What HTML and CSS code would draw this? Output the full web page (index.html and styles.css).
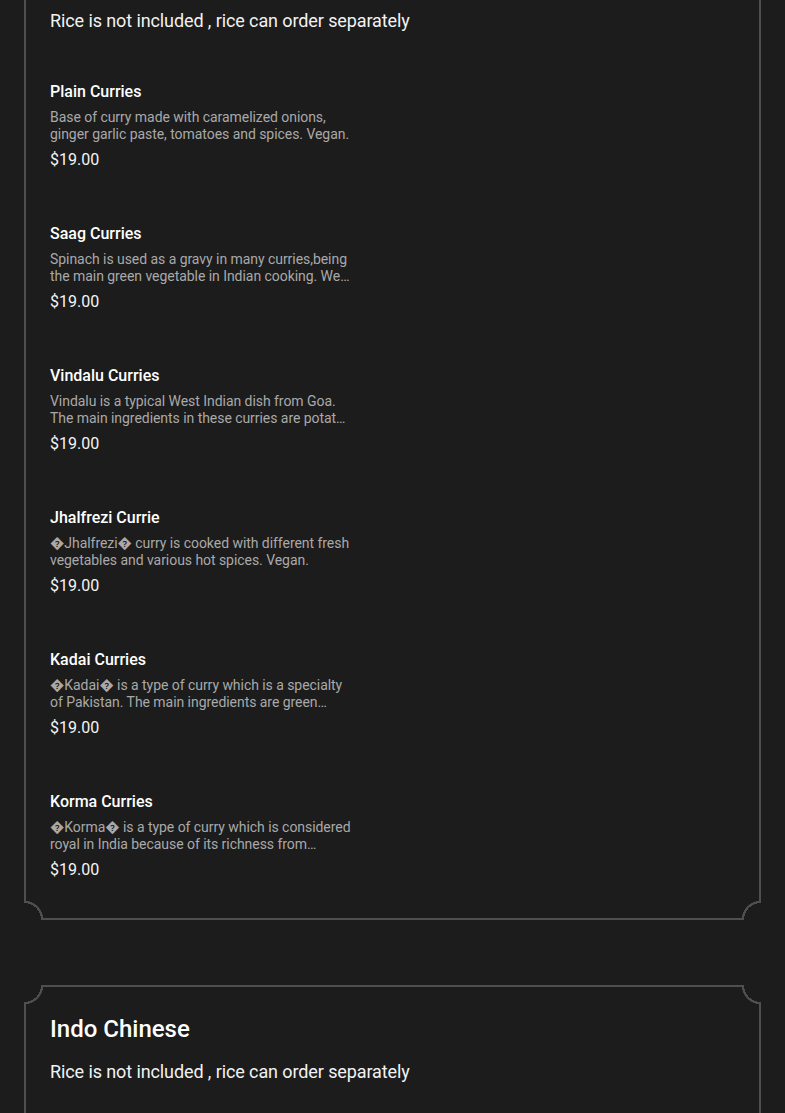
FILE: index.html
```html
<!DOCTYPE html>
<html lang="en">
<head>
<meta charset="utf-8">
<title>Menu</title>
<link rel="stylesheet" href="styles.css">
</head>
<body>
<main class="page">
  <section class="card card--continued">
    <span class="corner corner--tl"></span>
    <span class="corner corner--tr"></span>
    <span class="corner corner--bl"></span>
    <span class="corner corner--br"></span>
    <p class="note">Rice is not included , rice can order separately</p>
    <div class="items">
      <article class="item">
        <h3 class="item-title">Plain Curries</h3>
        <p class="item-desc">Base of curry made with caramelized onions, ginger garlic paste, tomatoes and spices. Vegan.</p>
        <p class="item-price">$19.00</p>
      </article>
      <article class="item">
        <h3 class="item-title">Saag Curries</h3>
        <p class="item-desc"><span class="line">Spinach is used as a gravy in many curries,being</span><span class="line-rest">the main green vegetable in Indian cooking. We use fresh spinach cooked with spices. Vegan.</span></p>
        <p class="item-price">$19.00</p>
      </article>
      <article class="item">
        <h3 class="item-title">Vindalu Curries</h3>
        <p class="item-desc"><span class="line">Vindalu is a typical West Indian dish from Goa.</span><span class="line line--clip">The main ingredients in these curries are potatoes, vinegar and hot chilli.</span></p>
        <p class="item-price">$19.00</p>
      </article>
      <article class="item">
        <h3 class="item-title">Jhalfrezi Currie</h3>
        <p class="item-desc">&#xFFFD;Jhalfrezi&#xFFFD; curry is cooked with different fresh vegetables and various hot spices. Vegan.</p>
        <p class="item-price">$19.00</p>
      </article>
      <article class="item">
        <h3 class="item-title">Kadai Curries</h3>
        <p class="item-desc"><span class="line">&#xFFFD;Kadai&#xFFFD; is a type of curry which is a specialty</span><span class="line-rest">of Pakistan. The main ingredients are green peppers, onions and tomatoes.</span></p>
        <p class="item-price">$19.00</p>
      </article>
      <article class="item">
        <h3 class="item-title">Korma Curries</h3>
        <p class="item-desc"><span class="line">&#xFFFD;Korma&#xFFFD; is a type of curry which is considered</span><span class="line-rest line-rest--narrow">royal in India because of its richness from cream and cashew nuts.</span></p>
        <p class="item-price">$19.00</p>
      </article>
    </div>
  </section>

  <section class="card card--open">
    <span class="corner corner--tl"></span>
    <span class="corner corner--tr"></span>
    <span class="corner corner--bl"></span>
    <span class="corner corner--br"></span>
    <h2 class="card-title">Indo Chinese</h2>
    <p class="note">Rice is not included , rice can order separately</p>
  </section>
</main>
</body>
</html>
```

FILE: styles.css
```css
* { box-sizing: border-box; }

html, body {
  margin: 0;
  padding: 0;
  background: #1c1c1c;
}

body {
  font-family: Roboto, "Liberation Sans", sans-serif;
  color: #f4f4f4;
  overflow: hidden;
}

.page {
  display: flex;
  flex-direction: column;
  gap: 65px;
  padding: 0 24px;
}

.card {
  position: relative;
  border: 2px solid #4f4f4f;
  padding: 26px 24px 36px;
  display: flex;
  flex-direction: column;
}

.card--continued {
  margin-top: -60px;
  padding-top: 67px;
}

.card--open {
  min-height: 260px;
}

.corner {
  position: absolute;
  width: 21px;
  height: 21px;
}

.corner--tl {
  left: -2px; top: -2px;
  background: radial-gradient(circle at 0 0, #1c1c1c 0 17px, #4f4f4f 17px 19px, transparent 19.5px);
}
.corner--tr {
  right: -2px; top: -2px;
  background: radial-gradient(circle at 100% 0, #1c1c1c 0 17px, #4f4f4f 17px 19px, transparent 19.5px);
}
.corner--bl {
  left: -2px; bottom: -2px;
  background: radial-gradient(circle at 0 100%, #1c1c1c 0 17px, #4f4f4f 17px 19px, transparent 19.5px);
}
.corner--br {
  right: -2px; bottom: -2px;
  background: radial-gradient(circle at 100% 100%, #1c1c1c 0 17px, #4f4f4f 17px 19px, transparent 19.5px);
}

.card-title {
  margin: 0 0 15px;
  font-size: 24px;
  line-height: 32px;
  font-weight: 500;
  color: #ffffff;
}

.note {
  margin: 0;
  font-size: 18px;
  line-height: 24px;
  letter-spacing: -0.1px;
  color: #f2f2f2;
}

.items {
  display: flex;
  flex-direction: column;
  gap: 50px;
  margin-top: 47px;
}

.item {
  display: flex;
  flex-direction: column;
  max-width: 304px;
}

.item-title {
  margin: 0;
  font-size: 16px;
  line-height: 24px;
  font-weight: 500;
  color: #ffffff;
}

.item-desc {
  margin: 5px 0 0;
  font-size: 14px;
  line-height: 17px;
  letter-spacing: -0.05px;
  color: #a9a9a9;
  display: -webkit-box;
  -webkit-line-clamp: 2;
  -webkit-box-orient: vertical;
  overflow: hidden;
}

.line {
  display: block;
  white-space: nowrap;
}

.line--clip {
  max-width: 298px;
  overflow: hidden;
  text-overflow: ellipsis;
}

.line-rest {
  display: -webkit-box;
  -webkit-line-clamp: 1;
  -webkit-box-orient: vertical;
  overflow: hidden;
  max-width: 300px;
}

.line-rest--narrow {
  max-width: 288px;
}

.item-price {
  margin: 5px 0 0;
  font-size: 16px;
  line-height: 24px;
  color: #f4f4f4;
}
```
